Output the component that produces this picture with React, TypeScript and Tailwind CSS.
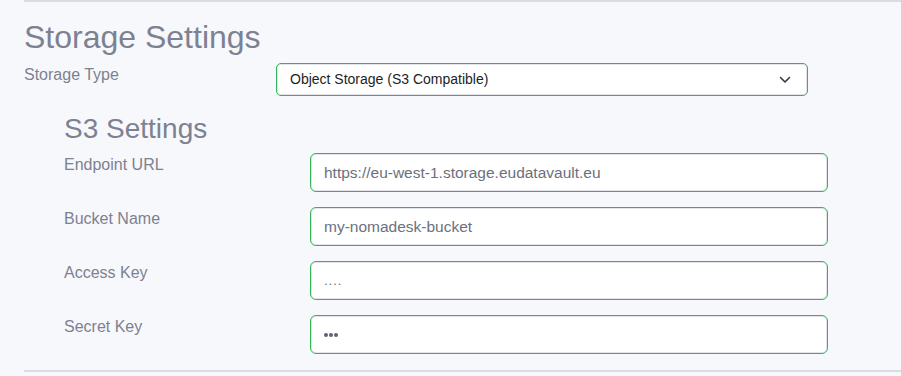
import React from 'react';

const fields = [
  { label: 'Endpoint URL', value: 'https://eu-west-1.storage.eudatavault.eu', kind: 'text' },
  { label: 'Bucket Name', value: 'my-nomadesk-bucket', kind: 'text' },
  { label: 'Access Key', value: '....', kind: 'dots' },
  { label: 'Secret Key', value: '•••', kind: 'bullets' },
];

const App = () => {
  return (
    <div
      className="min-h-screen w-full bg-[#f7f8fc]"
      style={{ fontFamily: '"Liberation Sans", Arial, sans-serif' }}
    >
      <div className="ml-[24px] h-[372px] border-t-2 border-b-2 border-[#dadce1]">
        {/* Header */}
        <h1 className="mt-[19px] text-[32px] leading-[32px] text-[#7d8191]">Storage Settings</h1>

        {/* Storage type */}
        <div className="mt-[10px] flex items-start">
          <label className="w-[252px] text-[16px] leading-[24px] text-[#7d8191]">Storage Type</label>
          <div className="flex h-[33px] w-[532px] items-center justify-between rounded-[5px] border border-[#34b458] bg-white pl-[13px] pr-[16px] shadow-[inset_0_0_0_1px_#e3e5ea]">
            <span className="text-[14px] text-[#1c1f24]">Object Storage (S3 Compatible)</span>
            <svg width="12" height="8" viewBox="0 0 12 8" fill="none">
              <path d="M1.5 1.5 L6 6 L10.5 1.5" stroke="#343a40" strokeWidth="1.6" strokeLinecap="round" strokeLinejoin="round" />
            </svg>
          </div>
        </div>

        {/* S3 settings */}
        <div className="pl-[40px]">
          <h2 className="mt-[19px] text-[28px] leading-[28px] text-[#7d8191]">S3 Settings</h2>
          <div className="mt-[10px] flex flex-col gap-[15px]">
            {fields.map(f => (
              <div key={f.label} className="flex items-start">
                <label className="w-[246px] text-[16px] leading-[24px] text-[#7d8191]">{f.label}</label>
                <div className="flex h-[39px] w-[518px] items-center rounded-[6px] border border-[#34b458] bg-white pl-[13px] shadow-[inset_0_0_0_1px_#e3e5ea]">
                  {f.kind === 'text' && (
                    <span className="text-[15.5px] text-[#6c707e]">{f.value}</span>
                  )}
                  {f.kind === 'dots' && (
                    <span className="text-[13px] tracking-[1px] text-[#6c707e]">{f.value}</span>
                  )}
                  {f.kind === 'bullets' && (
                    <span className="flex gap-[1px]">
                      <span className="h-[4px] w-[4px] rounded-full bg-[#5f6372]" />
                      <span className="h-[4px] w-[4px] rounded-full bg-[#5f6372]" />
                      <span className="h-[4px] w-[4px] rounded-full bg-[#5f6372]" />
                    </span>
                  )}
                </div>
              </div>
            ))}
          </div>
        </div>
      </div>
    </div>
  );
};

export default App;
